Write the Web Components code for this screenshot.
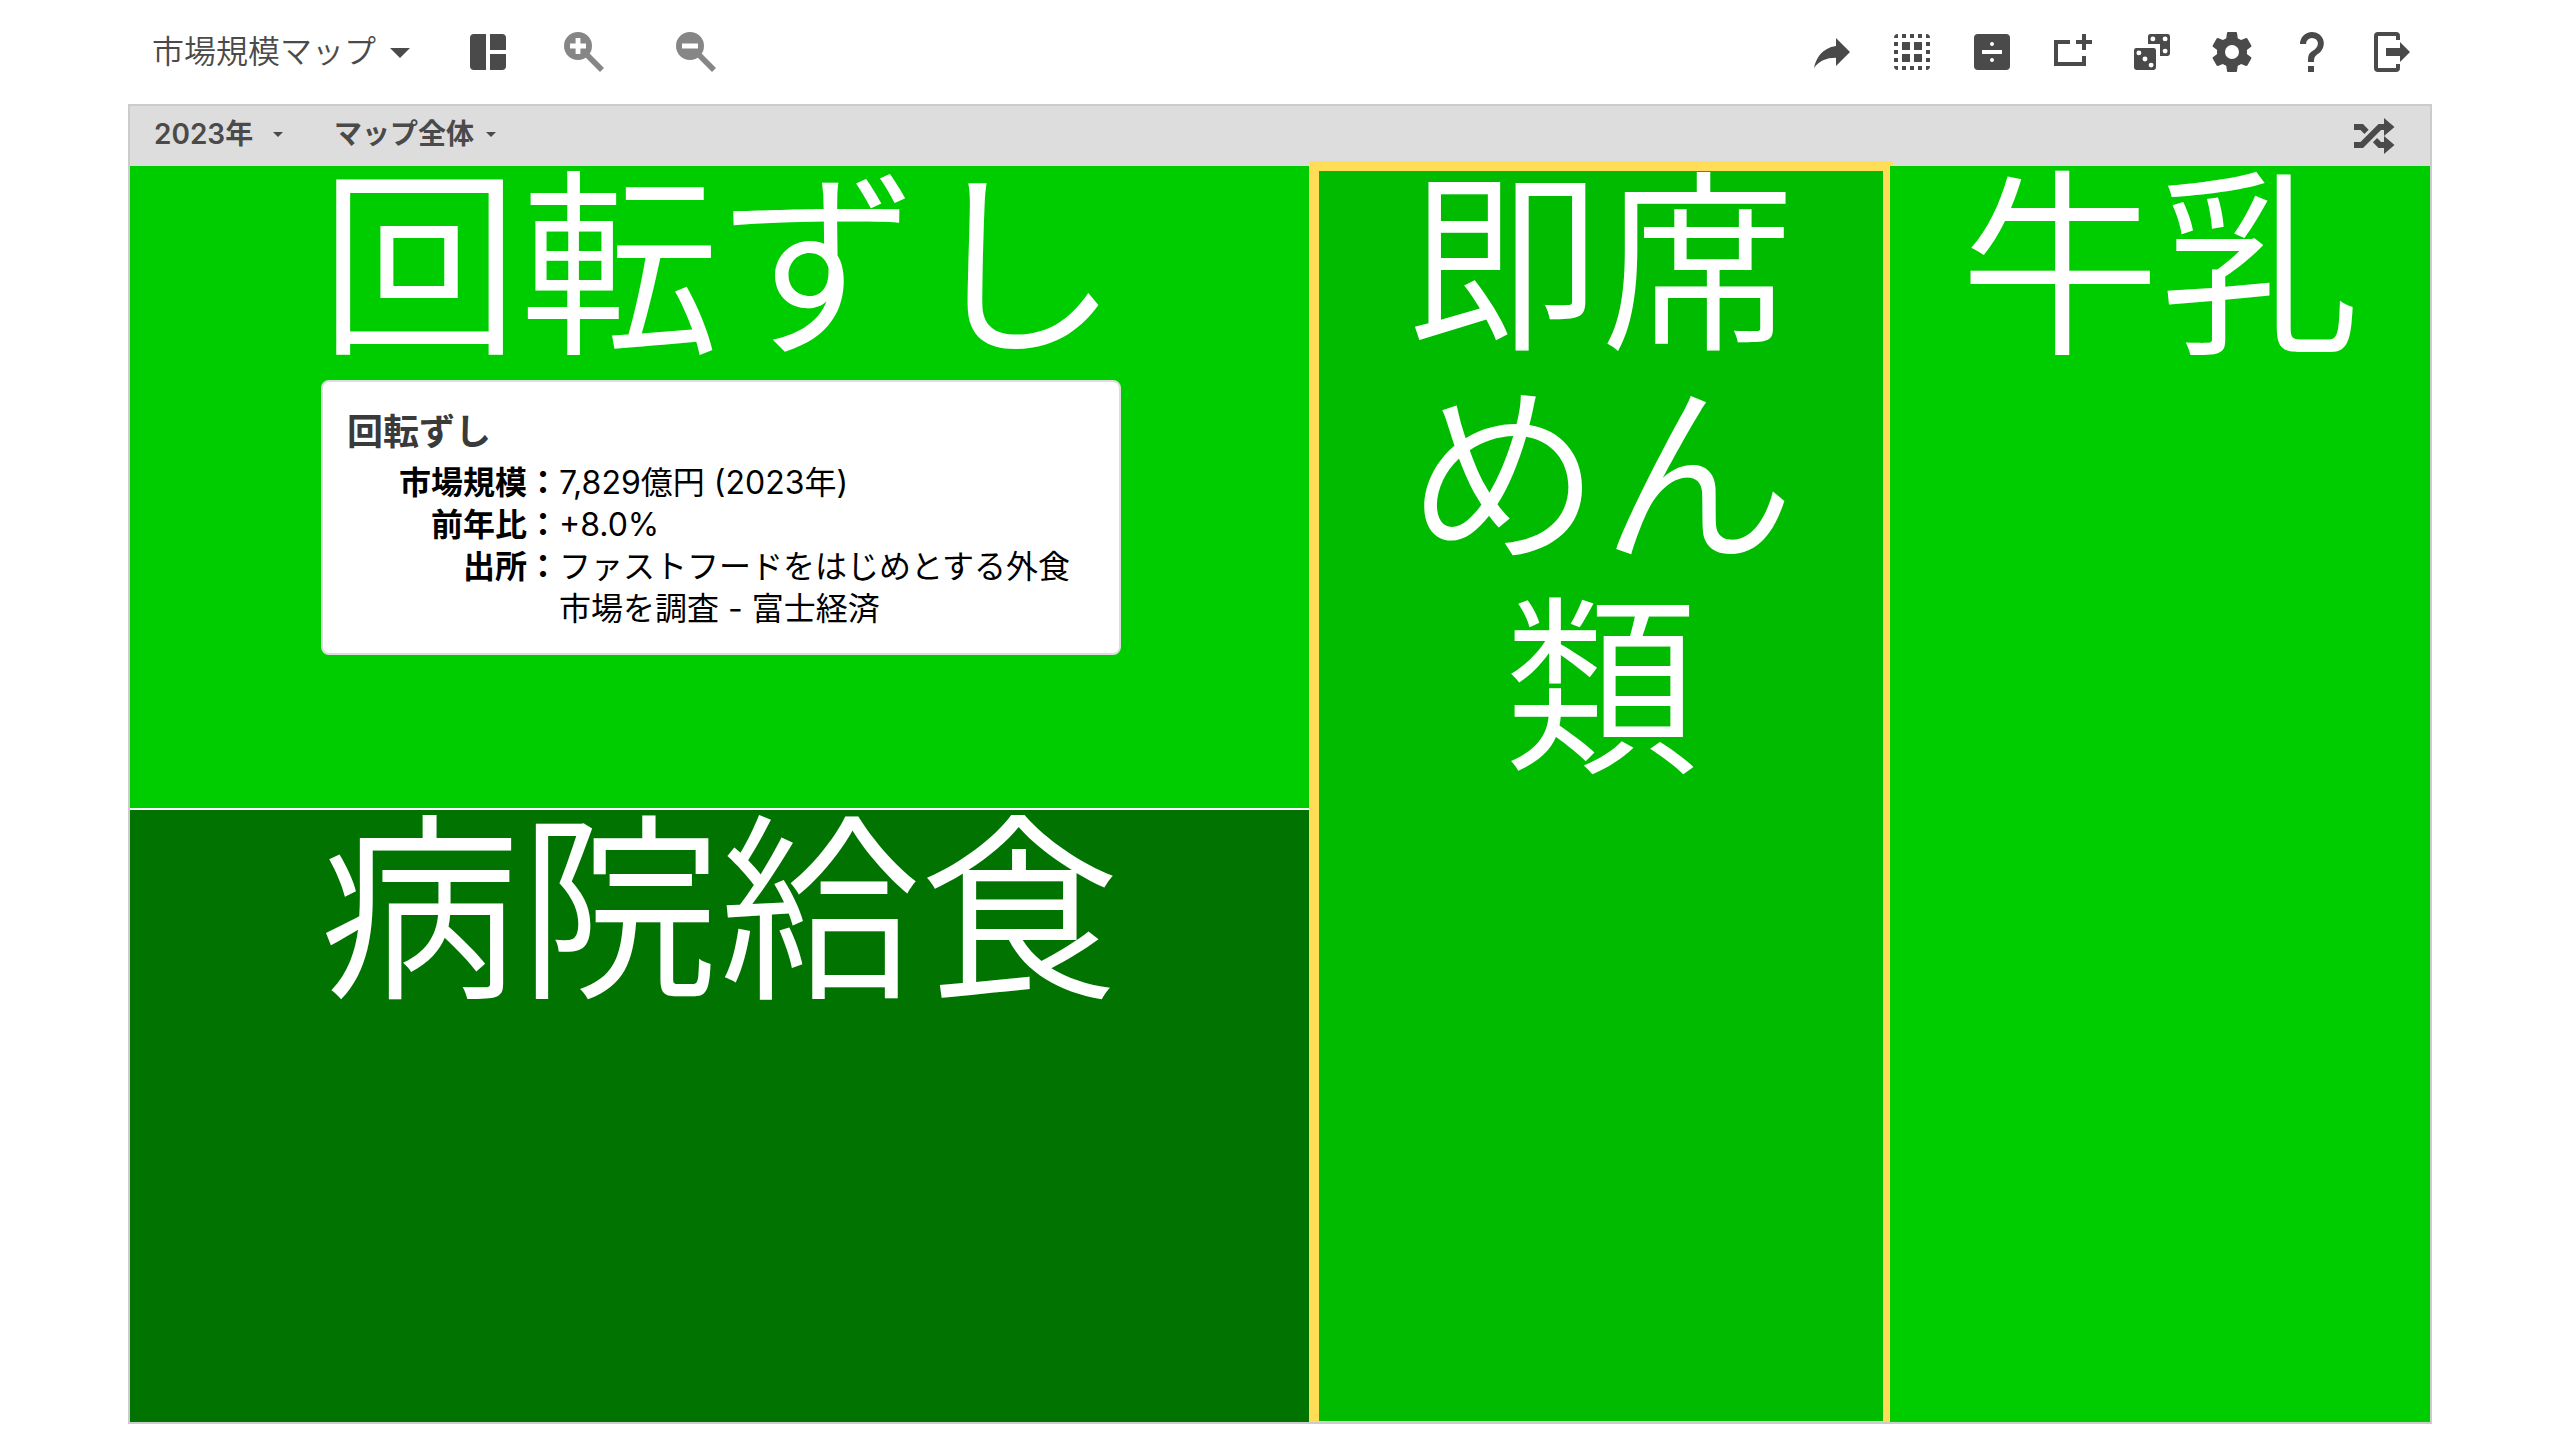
<!DOCTYPE html>
<html lang="ja">
<head>
<meta charset="utf-8">
<title>市場規模マップ</title>
<style>
  html, body { margin: 0; height: 100%; background: #fff; }
  body {
    font-family: Inter, "Noto Sans CJK JP", sans-serif;
    color: #4a4a4a;
    --ink: #4a4a4a;
    --muted: #868686;
    --line: #ccc;
    --bar: #ddd;
    --select: #ffdd57;
  }
</style>
</head>
<body>
<market-app></market-app>

<template id="tpl-app">
  <style>
    :host { display: flex; flex-direction: column; box-sizing: border-box; min-height: 100vh; padding: 0 5% 16px; }
    header { display: flex; align-items: center; justify-content: space-between; height: 104px; padding: 0 16px 0 24px; }
    .tools { display: flex; align-items: center; gap: 32px; }
    .views { display: flex; align-items: center; gap: 40px; }
    .zoom { display: flex; gap: 64px; margin-left: 8px; }
    .title {
      display: flex; align-items: center; margin: 0; padding: 0; border: 0; background: none;
      font: inherit; font-weight: 350; font-size: 32px; line-height: 48px; color: var(--ink);
    }
    main { flex: 1; display: flex; flex-direction: column; border: 2px solid var(--line); overflow: hidden; }
    .filters { display: flex; align-items: center; justify-content: space-between; height: 60px; padding: 0 32px 0 24px; background: var(--bar); }
    .filters div { display: flex; gap: 44px; padding-bottom: 4px; }
    .map { flex: 1; display: grid; grid-template-columns: 1179fr 581fr 540fr; }
    .stack { display: grid; grid-template-rows: 642fr 612fr; gap: 2px; background: #fff; }
    map-tile.chosen { margin: -5px -3px -9px 0; }
  </style>
  <header>
    <div class="views">
      <button class="title" aria-haspopup="menu">市場規模マップ<ui-icon name="menu-down"></ui-icon></button>
      <icon-button name="dashboard" label="レイアウト"></icon-button>
      <div class="zoom">
        <icon-button class="muted" name="zoom-in" label="拡大"></icon-button>
        <icon-button class="muted" name="zoom-out" label="縮小"></icon-button>
      </div>
    </div>
    <div class="tools">
      <icon-button name="share" label="共有"></icon-button>
      <icon-button name="group" label="グループ"></icon-button>
      <icon-button name="divide" label="比較"></icon-button>
      <icon-button name="add-box" label="追加"></icon-button>
      <icon-button name="dice" label="ランダム"></icon-button>
      <icon-button name="cog" label="設定"></icon-button>
      <icon-button name="help" label="ヘルプ"></icon-button>
      <icon-button name="exit" label="終了"></icon-button>
    </div>
  </header>
  <main>
    <div class="filters">
      <div>
        <filter-select label="年" value="2023年"></filter-select>
        <filter-select label="範囲" value="マップ全体"></filter-select>
      </div>
      <icon-button name="shuffle" label="シャッフル"></icon-button>
    </div>
    <div class="map">
      <div class="stack">
        <map-tile style="--fill:#00cd00">回転ずし
          <tile-tip slot="tip">
            <span slot="title">回転ずし</span>
            <span slot="size">7,829億円 (2023年)</span>
            <span slot="growth">+8.0%</span>
            <span slot="source">ファストフードをはじめとする外食市場を調査 - 富士経済</span>
          </tile-tip>
        </map-tile>
        <map-tile style="--fill:#007300">病院給食</map-tile>
      </div>
      <map-tile class="chosen" chosen style="--fill:#00bb00">即席めん類</map-tile>
      <map-tile style="--fill:#00cd00">牛乳</map-tile>
    </div>
  </main>
</template>

<template id="tpl-tile">
  <style>
    :host { display: flow-root; position: relative; box-sizing: border-box; background: var(--fill); color: #fff; }
    :host([chosen]) { position: static; border: 10px solid var(--select); padding: 0 80px; }
    .name { margin-top: -6px; font-size: 200px; line-height: 212px; font-weight: 350; text-align: center; }
    :host([chosen]) .name { margin-top: -12px; font-size: 194px; }
  </style>
  <div class="name"><slot></slot></div>
  <slot name="tip"></slot>
</template>

<template id="tpl-tip">
  <style>
    :host {
      display: block; position: absolute; left: 191px; top: 214px; box-sizing: border-box; width: 800px;
      padding: 25px 24px 23px; border: 2px solid #ddd; border-radius: 8px; background: #fff; color: #000;
    }
    h2 { margin: 0 0 5px; font-size: 36px; line-height: 50px; font-weight: 600; color: #3a3a3a; }
    dl { display: grid; grid-template-columns: 212px 1fr; margin: 0; padding-right: 20px; font-size: 32px; line-height: 42px; }
    dt { text-align: right; font-weight: 700; }
    dd { margin: 0; font-weight: 400; }
  </style>
  <h2><slot name="title"></slot></h2>
  <dl>
    <dt>市場規模：</dt><dd><slot name="size"></slot></dd>
    <dt>前年比：</dt><dd><slot name="growth"></slot></dd>
    <dt>出所：</dt><dd><slot name="source"></slot></dd>
  </dl>
</template>

<template id="tpl-icon-button">
  <style>
    :host { display: block; color: var(--ink); }
    :host(.muted) { color: var(--muted); }
    button { display: block; margin: 0; padding: 0; border: 0; background: none; color: inherit; }
  </style>
  <button><ui-icon></ui-icon></button>
</template>

<template id="tpl-filter">
  <style>
    :host { display: flex; align-items: center; color: var(--ink); }
    select {
      appearance: none; min-width: 108px; margin: 0; padding: 0; border: 0; background: none; color: inherit;
      font: inherit; font-size: 28px; line-height: 40px; font-weight: 600;
    }
    ui-icon { margin-left: 4px; --size: 24px; }
  </style>
  <select></select><ui-icon name="menu-down"></ui-icon>
</template>

<script>
  const ICONS = {
    'menu-down': '<path d="M7 10l5 5 5-5z"/>',
    'dashboard': '<path d="M11 3v18H5a2 2 0 0 1-2-2V5a2 2 0 0 1 2-2zM13 3h6a2 2 0 0 1 2 2v6h-8zM13 13h8v6a2 2 0 0 1-2 2h-6z"/>',
    'zoom-in': '<path fill-rule="evenodd" d="M9 2a7 7 0 1 1 0 14A7 7 0 0 1 9 2zM7.8 5v2.8H5v2.4h2.8V13h2.4v-2.8H13V7.8h-2.8V5z"/><path d="M14.8 12.8L22 20l-2 2-7.2-7.2z"/>',
    'zoom-out': '<path fill-rule="evenodd" d="M9 2a7 7 0 1 1 0 14A7 7 0 0 1 9 2zM5 7.8v2.4h8V7.8z"/><path d="M14.8 12.8L22 20l-2 2-7.2-7.2z"/>',
    'share': '<path d="M21 12l-7-7v4C7 10 4 15 3 20c2.5-3.5 6-5.1 11-5.1V19z"/>',
    'group': '<path d="M5 3v2H3a2 2 0 0 1 2-2zM19 3a2 2 0 0 1 2 2h-2zM3 19h2v2a2 2 0 0 1-2-2zM19 19h2a2 2 0 0 1-2 2zM7 3h2v2H7zM11 3h2v2h-2zM15 3h2v2h-2zM7 19h2v2H7zM11 19h2v2h-2zM15 19h2v2h-2zM3 7h2v2H3zM3 11h2v2H3zM3 15h2v2H3zM19 7h2v2h-2zM19 11h2v2h-2zM19 15h2v2h-2zM7 7h4v4H7zM13 7h4v4h-4zM7 13h4v4H7zM13 13h4v4h-4z"/>',
    'divide': '<path fill-rule="evenodd" d="M5 3h14a2 2 0 0 1 2 2v14a2 2 0 0 1-2 2H5a2 2 0 0 1-2-2V5a2 2 0 0 1 2-2zM7 11v2h10v-2zM12 7a1 1 0 1 0 0 2 1 1 0 0 0 0-2zM12 15a1 1 0 1 0 0 2 1 1 0 0 0 0-2z"/>',
    'add-box': '<path d="M3 6h8v2H5v9h12v-3h2v5H3zM17 3h2v3h3v2h-3v3h-2V8h-3V6h3z"/>',
    'dice': '<path d="M11.2 3h8.6A1.2 1.2 0 0 1 21 4.2v8.6a1.2 1.2 0 0 1-1.2 1.2H16V8h-6V4.2A1.2 1.2 0 0 1 11.2 3zM4.2 10h8.6a1.2 1.2 0 0 1 1.2 1.2v8.6a1.2 1.2 0 0 1-1.2 1.2H4.2A1.2 1.2 0 0 1 3 19.8v-8.6A1.2 1.2 0 0 1 4.2 10z"/><g fill="#fff"><circle cx="12.44" cy="5.44" r="1.23"/><circle cx="18.56" cy="5.44" r="1.23"/><circle cx="18.56" cy="11.56" r="1.23"/><circle cx="5.44" cy="12.44" r="1.23"/><circle cx="8.5" cy="15.5" r="1.23"/><circle cx="11.56" cy="18.56" r="1.23"/></g>',
    'cog': '<path d="M12,15.5A3.5,3.5 0 0,1 8.5,12A3.5,3.5 0 0,1 12,8.5A3.5,3.5 0 0,1 15.5,12A3.5,3.5 0 0,1 12,15.5M19.43,12.97C19.47,12.65 19.5,12.33 19.5,12C19.5,11.67 19.47,11.34 19.43,11L21.54,9.37C21.73,9.22 21.78,8.95 21.66,8.73L19.66,5.27C19.54,5.05 19.27,4.96 19.05,5.05L16.56,6.05C16.04,5.66 15.5,5.32 14.87,5.07L14.5,2.42C14.46,2.18 14.25,2 14,2H10C9.75,2 9.54,2.18 9.5,2.42L9.13,5.07C8.5,5.32 7.96,5.66 7.44,6.05L4.95,5.05C4.73,4.96 4.46,5.05 4.34,5.27L2.34,8.73C2.21,8.95 2.27,9.22 2.46,9.37L4.57,11C4.53,11.34 4.5,11.67 4.5,12C4.5,12.33 4.53,12.65 4.57,12.97L2.46,14.63C2.27,14.78 2.21,15.05 2.34,15.27L4.34,18.73C4.46,18.95 4.73,19.03 4.95,18.95L7.44,17.94C7.96,18.34 8.5,18.68 9.13,18.93L9.5,21.58C9.54,21.82 9.75,22 10,22H14C14.25,22 14.46,21.82 14.5,21.58L14.87,18.93C15.5,18.67 16.04,18.34 16.56,17.94L19.05,18.95C19.27,19.03 19.54,18.95 19.66,18.73L21.66,15.27C21.78,15.05 21.73,14.78 21.54,14.63L19.43,12.97Z"/>',
    'help': '<path d="M10,19H13V22H10V19M12,2C17.35,2.22 19.68,7.62 16.5,11.67C15.67,12.67 14.33,13.33 13.67,14.17C13,15 13,16 13,17H10C10,15.33 10,13.92 10.67,12.92C11.33,11.92 12.67,11.33 13.5,10.67C15.92,8.43 15.32,5.26 12,5A3,3 0 0,0 9,8H6A6,6 0 0,1 12,2Z"/>',
    'exit': '<path d="M5 2h9a2 2 0 0 1 2 2v2h-2V4H5v16h9v-2h2v2a2 2 0 0 1-2 2H5a2 2 0 0 1-2-2V4a2 2 0 0 1 2-2zM9 10h7V7l5 5-5 5v-3H9z"/>',
    'shuffle': '<path d="M17,3L22.25,7.5L17,12L22.25,16.5L17,21V18H14.26L11.44,15.18L13.56,13.06L15.5,15H17V12L17,9H15.5L6.5,18H2V15H5.26L14.26,6H17V3M2,6H6.5L9.32,8.82L7.2,10.94L5.26,9H2V6Z"/>'
  };

  const fromTemplate = (host, id) => {
    const root = host.attachShadow({ mode: 'open' });
    root.append(document.getElementById(id).content.cloneNode(true));
    return root;
  };

  customElements.define('ui-icon', class extends HTMLElement {
    static observedAttributes = ['name'];
    constructor() { super(); this.attachShadow({ mode: 'open' }); }
    attributeChangedCallback() {
      this.shadowRoot.innerHTML =
        '<style>:host{display:block}svg{display:block;width:var(--size,48px);height:var(--size,48px);fill:currentColor}</style>' +
        '<svg viewBox="0 0 24 24" aria-hidden="true">' + ICONS[this.getAttribute('name')] + '</svg>';
    }
  });

  customElements.define('icon-button', class extends HTMLElement {
    connectedCallback() {
      if (this.shadowRoot) return;
      const root = fromTemplate(this, 'tpl-icon-button');
      root.querySelector('button').setAttribute('aria-label', this.getAttribute('label'));
      root.querySelector('ui-icon').setAttribute('name', this.getAttribute('name'));
    }
  });

  customElements.define('filter-select', class extends HTMLElement {
    connectedCallback() {
      if (this.shadowRoot) return;
      const select = fromTemplate(this, 'tpl-filter').querySelector('select');
      select.setAttribute('aria-label', this.getAttribute('label'));
      select.add(new Option(this.getAttribute('value')));
    }
  });

  for (const [tag, id] of [['tile-tip', 'tpl-tip'], ['map-tile', 'tpl-tile'], ['market-app', 'tpl-app']]) {
    customElements.define(tag, class extends HTMLElement {
      connectedCallback() { if (!this.shadowRoot) fromTemplate(this, id); }
    });
  }
</script>
</body>
</html>
